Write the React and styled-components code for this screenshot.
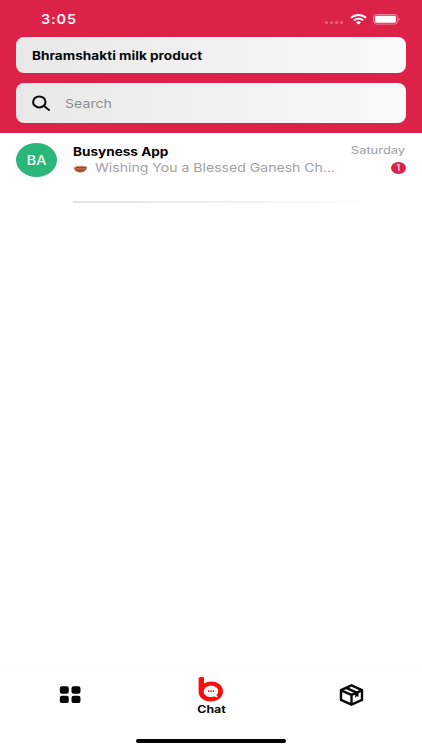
import React from 'react'
import styled, { createGlobalStyle } from 'styled-components'

const chats = [
  {
    id: 1,
    initials: 'BA',
    name: 'Busyness App',
    message: 'Wishing You a Blessed Ganesh Ch...',
    day: 'Saturday',
    unread: 1,
  },
]

function StatusBar() {
  return (
    <StatusRow>
      <Time><Stretch $x={1.07}>3:05</Stretch></Time>
      <StatusIcons>
        <Signal><i /><i /><i /><i /></Signal>
        <svg width="17" height="10.5" viewBox="0 0 17 11" preserveAspectRatio="none">
          <g fill="none" stroke="#fff" strokeWidth="2">
            <path d="M1 4.1C5.2.1 11.8.1 16 4.1" />
            <path d="M3.8 6.7c2.8-2.5 6.6-2.5 9.4 0" />
          </g>
          <path d="M6 8.6c1.5-1.3 3.5-1.3 5 0L8.5 11z" fill="#fff" />
        </svg>
        <svg width="27" height="11" viewBox="0 0 27 11">
          <rect x=".5" y=".5" width="24" height="9.6" rx="3" fill="none" stroke="#fff" strokeOpacity=".45" />
          <rect x="1.8" y="1.8" width="21.2" height="7" rx="1.6" fill="#fff" />
          <path d="M25.6 3.6c1.4.5 1.4 3 0 3.5z" fill="#fff" fillOpacity=".6" />
        </svg>
      </StatusIcons>
    </StatusRow>
  )
}

function ChatItem({ chat }) {
  return (
    <ChatRow>
      <Avatar><Stretch $x={1.14} $from="center">{chat.initials}</Stretch></Avatar>
      <ChatBody>
        <ChatTop>
          <div>
            <ChatName><Stretch $x={1.18}>{chat.name}</Stretch></ChatName>
            <Message>
              <svg width="15" height="10" viewBox="0 0 15 10">
                <path d="M.5 4c.8 3.600 3 5.400 6.700 5.400S13.400 7.600 14.400 4z" fill="#b0502f" />
                <ellipse cx="7.500" cy="4.200" rx="6.900" ry="1.500" fill="#e6b39a" />
                <ellipse cx="8" cy="4.500" rx="5.400" ry=".9" fill="#96402a" />
                <path d="M2.800.4c.9 1 1.200 2.200.7 3.300-1-.8-1.300-2.200-.7-3.300z" fill="#eec0a0" />
              </svg>
              <Stretch $x={1.172}>{chat.message}</Stretch>
            </Message>
          </div>
          <Meta>
            <Day><Stretch $x={1.23} $from="right">{chat.day}</Stretch></Day>
            <Badge>{chat.unread}</Badge>
          </Meta>
        </ChatTop>
        <Divider />
      </ChatBody>
    </ChatRow>
  )
}

function TabBar() {
  return (
    <Tabs>
      <Tab>
        <svg width="22" height="18" viewBox="0 0 22 18" fill="#080808">
          <rect x=".8" y=".3" width="9" height="7.4" rx="2.2" />
          <rect x="12.5" y=".3" width="9" height="7.4" rx="2.2" />
          <rect x=".8" y="9.7" width="9" height="7.4" rx="2.2" />
          <rect x="12.5" y="9.7" width="9" height="7.4" rx="2.2" />
        </svg>
      </Tab>
      <Tab>
        <svg width="26" height="26" viewBox="0 0 26 26">
          <path d="M.6 2.200C.6.800 6-.4 6 2.200v5.200c2-1.300 4.500-2 7.400-2C20 5.400 25 9.700 25 15.300s-5 10.100-12 10.100C5.500 25.400.6 21.200.6 15.500z" fill="#f90d0d" />
          <path d="M13 9.800c4.300 0 7.200 2.300 7.200 5.500 0 1.500-.7 2.800-1.800 3.700l1.500 2.400-3.700-.9c-1 .3-2 .5-3.200.5-4.400 0-7.200-2.400-7.200-5.600S8.700 9.800 13 9.800z" fill="#fff" />
          <g fill="#d51212">
            <circle cx="10.600" cy="15.100" r=".9" />
            <circle cx="13" cy="15.100" r=".9" />
            <circle cx="15.400" cy="15.100" r=".9" />
          </g>
        </svg>
        <TabLabel><Stretch $x={1.23} $from="center">Chat</Stretch></TabLabel>
      </Tab>
      <Tab>
        <svg width="25" height="22" viewBox="0 0 25 22" fill="none" stroke="#080808" strokeWidth="2.4" strokeLinejoin="round">
          <path d="M12.500 1.300L23 6.100v9.800l-10.500 4.800L2 15.900V6.100z" />
          <path d="M2 6.300l10.500 4.600L23 6.300M12.500 11.100v9.600" />
          <path d="M7.200 3.900l10.500 4.800" />
          <path d="M16.300 8.800l3-1.400v5l-1.500-.4-1.500 1.400z" fill="#080808" strokeWidth=".4" />
        </svg>
      </Tab>
    </Tabs>
  )
}

export default function App() {
  return (
    <>
      <GlobalStyle />
      <Screen>
        <Header>
          <StatusBar />
          <Business><Stretch $x={1.185}>Bhramshakti milk product</Stretch></Business>
          <Search>
            <svg width="19" height="16" viewBox="0 0 19 16" fill="none" stroke="#080808" strokeWidth="2">
              <ellipse cx="7.300" cy="6.900" rx="6.200" ry="5.500" />
              <path d="M12 10.900l5 4.100" strokeLinecap="round" />
            </svg>
            <Stretch $x={1.16}>Search</Stretch>
          </Search>
        </Header>
        <List>
          {chats.map((chat) => <ChatItem key={chat.id} chat={chat} />)}
        </List>
        <TabBar />
        <HomeIndicator />
      </Screen>
    </>
  )
}

const GlobalStyle = createGlobalStyle`
  * { box-sizing: border-box; }
  body {
    margin: 0;
    background: #fefefe;
    font-family: Inter, "Liberation Sans", sans-serif;
  }
  svg { display: block; flex: none; }
`

const Stretch = styled.span`
  display: inline-block;
  white-space: nowrap;
  transform: scaleX(${(p) => p.$x});
  transform-origin: ${(p) => p.$from || 'left'};
`

const Screen = styled.div`
  display: flex;
  flex-direction: column;
  width: 422px;
  height: 750px;
  overflow: hidden;
`

const Header = styled.header`
  flex: none;
  height: 133px;
  padding: 0 16.4px;
  background: #dc2249;
`

const StatusRow = styled.div`
  display: flex;
  justify-content: space-between;
  height: 37px;
  padding: 0 5.5px 0 24.5px;
`

const Time = styled.div`
  margin-top: 11px;
  color: #fff0f3;
  font-size: 13.5px;
  line-height: 17px;
  font-weight: 600;
  letter-spacing: 0.8px;
`

const StatusIcons = styled.div`
  display: flex;
  align-items: flex-start;
  gap: 6.5px;
  padding-top: 14px;
`

const Signal = styled.div`
  display: flex;
  gap: 2px;
  margin-top: 7px;
  i {
    width: 3px;
    height: 3px;
    border-radius: 50%;
    background: #e8667f;
  }
`

const Field = styled.div`
  display: flex;
  align-items: center;
  padding: 0 15px 0 15.6px;
  border-radius: 8px;
  background: linear-gradient(90deg, #e8e8e8, #fafafa);
`

const Business = styled(Field)`
  height: 36px;
  padding-top: 2px;
  color: #080808;
  font-size: 11.5px;
  font-weight: 700;
`

const Search = styled(Field)`
  gap: 14.5px;
  height: 40px;
  margin-top: 10px;
  color: #8d8d8d;
  font-size: 12.2px;
`

const List = styled.main`
  flex: 1;
`

const ChatRow = styled.div`
  display: flex;
  gap: 15.2px;
  padding: 10px 16.4px 0;
`

const Avatar = styled.div`
  display: flex;
  flex: none;
  align-items: center;
  justify-content: center;
  width: 41px;
  height: 34px;
  border-radius: 50%;
  background: #2bb779;
  color: #f1fff8;
  font-size: 12.5px;
  font-weight: 500;
`

const ChatBody = styled.div`
  flex: 1;
`

const ChatTop = styled.div`
  display: flex;
  justify-content: space-between;
  height: 58px;
`

const ChatName = styled.div`
  margin-top: 1px;
  color: #050505;
  font-size: 11.5px;
  line-height: 16px;
  font-weight: 700;
`

const Message = styled.div`
  display: flex;
  align-items: center;
  gap: 7.5px;
  color: #a2a2a2;
  font-size: 12px;
  line-height: 16px;
`

const Meta = styled.div`
  display: flex;
  flex-direction: column;
  align-items: flex-end;
`

const Day = styled.div`
  margin-top: 1px;
  color: #a0a0a0;
  font-size: 10.5px;
  line-height: 13px;
`

const Badge = styled.div`
  width: 14.5px;
  height: 12px;
  margin-top: 5px;
  border-radius: 50%;
  background: #dc2249;
  color: #fff;
  font-size: 9px;
  line-height: 12px;
  text-align: center;
`

const Divider = styled.div`
  height: 2px;
  background: linear-gradient(90deg, #e2e2e2, #fefefe 90%);
`

const Tabs = styled.nav`
  display: grid;
  flex: none;
  grid-template-columns: repeat(3, 1fr);
  height: 69px;
  background: #fff;
  box-shadow: 0 -1px 3px rgba(0, 0, 0, 0.015);
`

const Tab = styled.div`
  display: flex;
  flex-direction: column;
  align-items: center;
  justify-content: center;
  padding-bottom: 19px;
`

const TabLabel = styled.div`
  margin-top: 1px;
  padding-left: 1px;
  color: #080808;
  font-size: 10px;
  line-height: 12px;
  font-weight: 700;
`

const HomeIndicator = styled.div`
  flex: none;
  width: 150px;
  height: 4px;
  margin: 0 auto 7px;
  border-radius: 2px;
  background: #000;
`
